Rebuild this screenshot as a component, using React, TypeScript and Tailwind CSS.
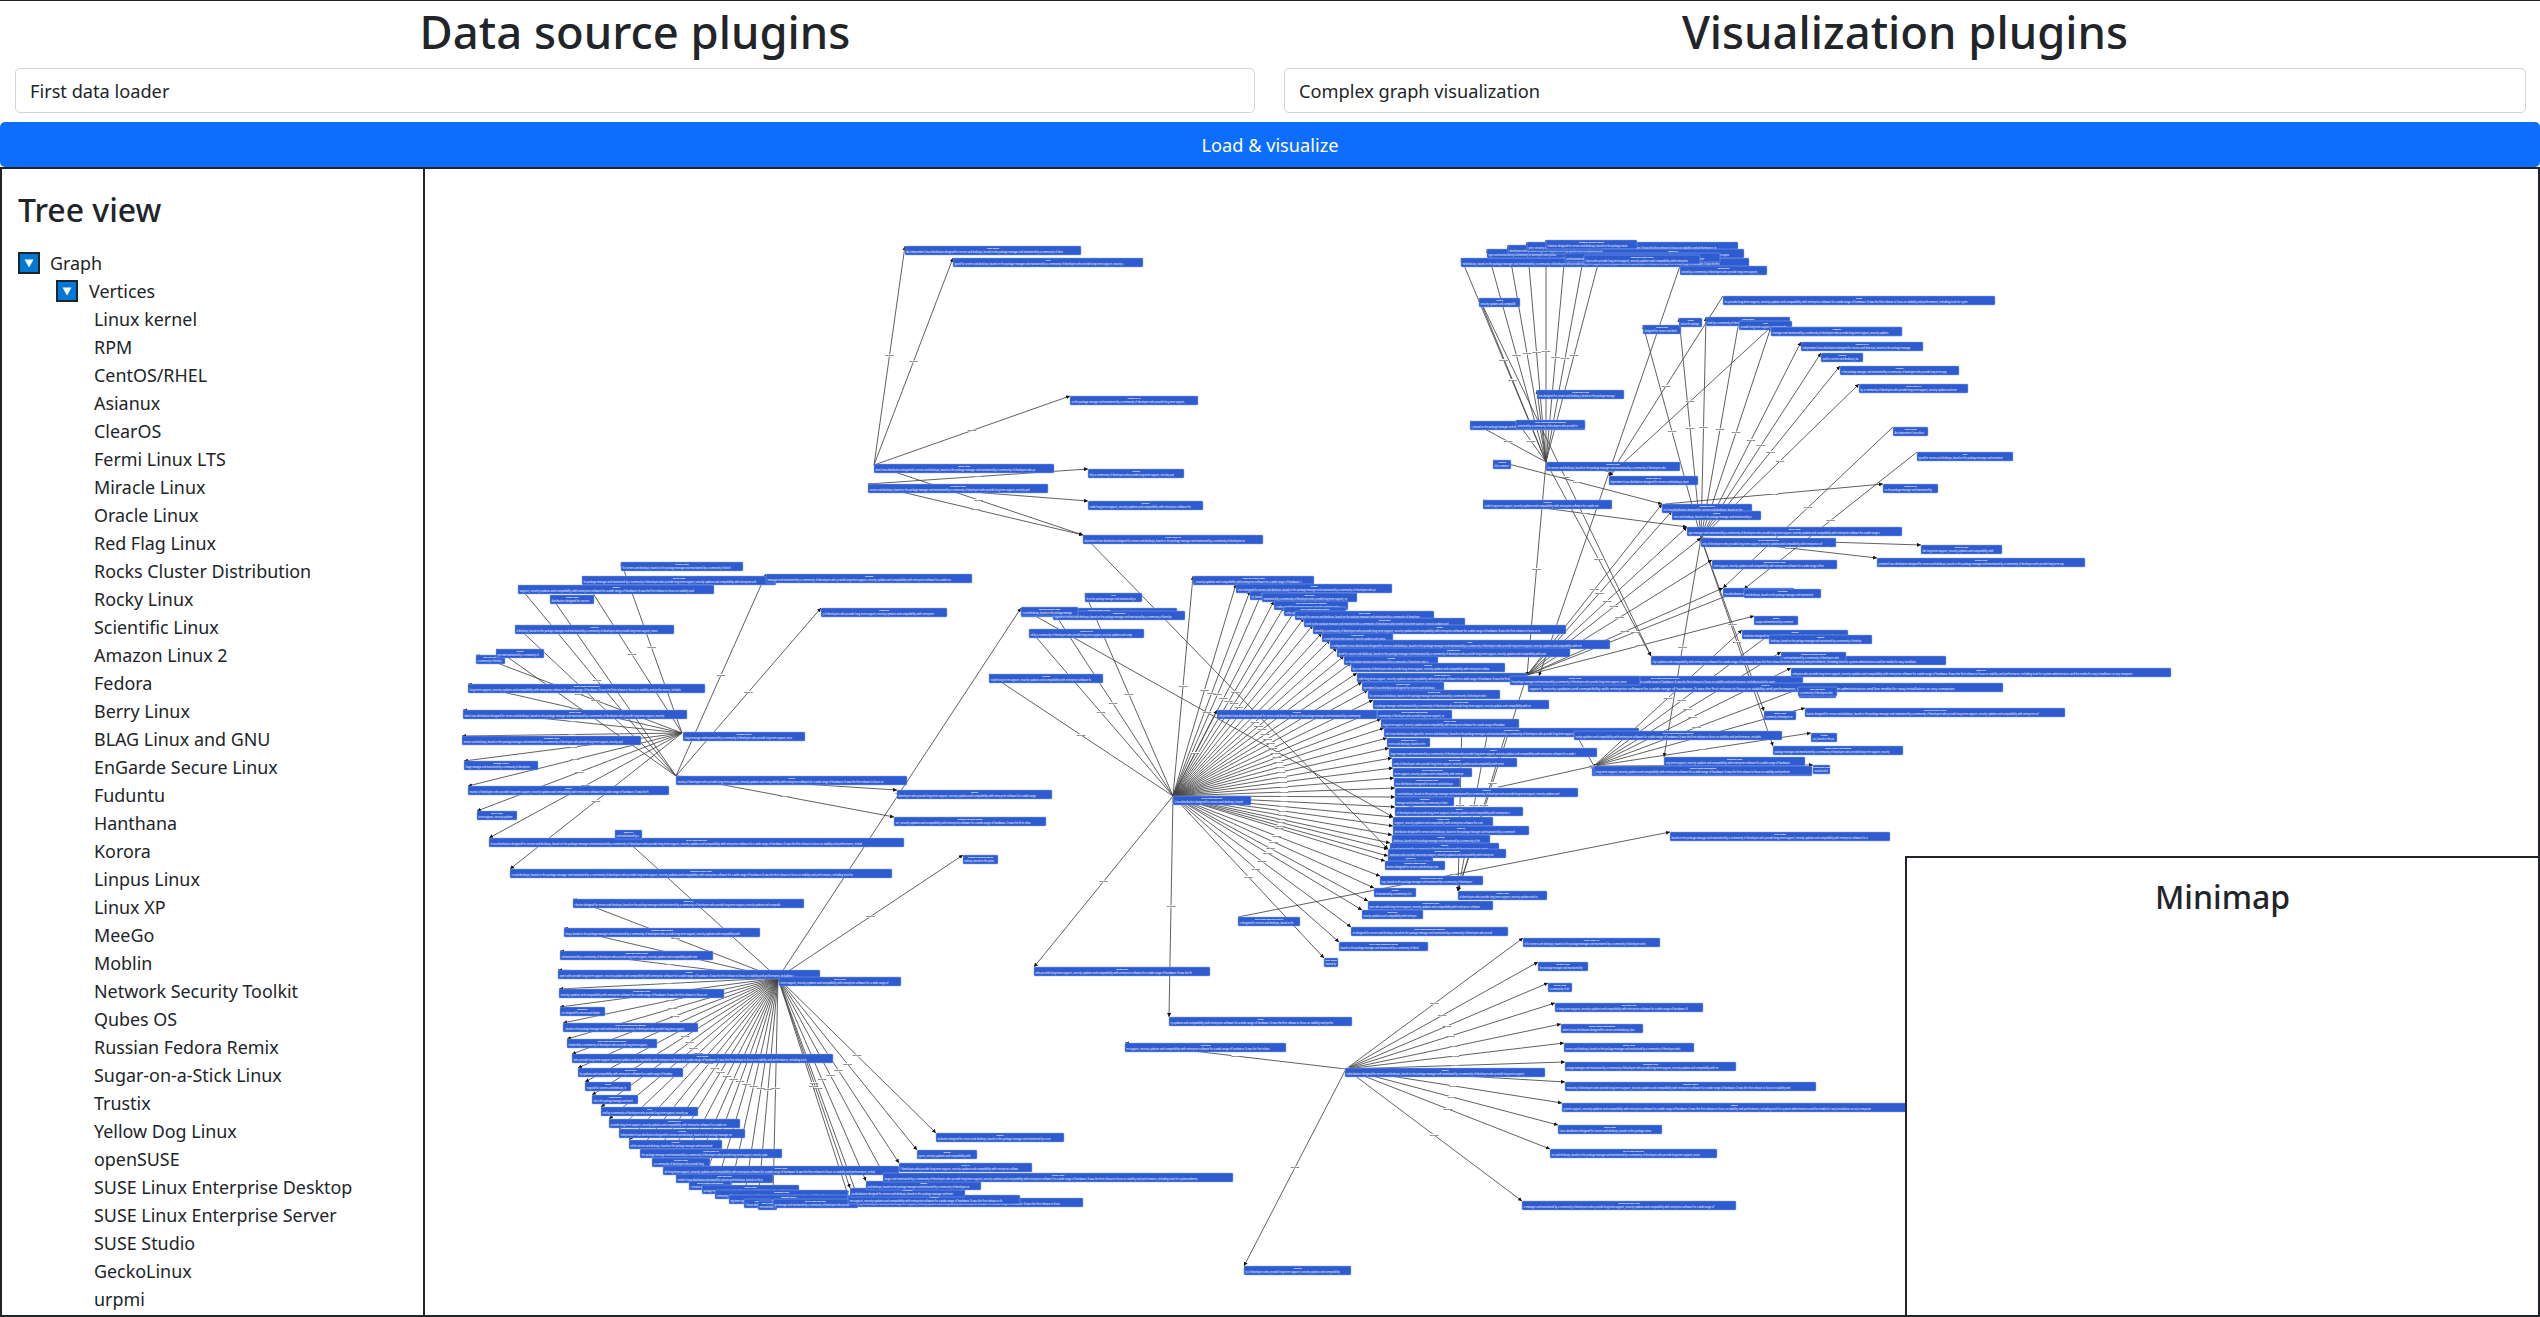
import React from 'react';

type N = [number, number, number];
type Group = { from: [number, number]; to: N[] };

const vertices = [
	'Linux kernel', 'RPM', 'CentOS/RHEL', 'Asianux', 'ClearOS', 'Fermi Linux LTS', 'Miracle Linux', 'Oracle Linux',
	'Red Flag Linux', 'Rocks Cluster Distribution', 'Rocky Linux', 'Scientific Linux', 'Amazon Linux 2', 'Fedora',
	'Berry Linux', 'BLAG Linux and GNU', 'EnGarde Secure Linux', 'Fuduntu', 'Hanthana', 'Korora', 'Linpus Linux',
	'Linux XP', 'MeeGo', 'Moblin', 'Network Security Toolkit', 'Qubes OS', 'Russian Fedora Remix', 'Sugar-on-a-Stick Linux',
	'Trustix', 'Yellow Dog Linux', 'openSUSE', 'SUSE Linux Enterprise Desktop', 'SUSE Linux Enterprise Server',
	'SUSE Studio', 'GeckoLinux', 'urpmi',
];

const blurb =
	'An independent Linux distribution designed for servers and desktops, based on the package manager and maintained by a community of developers who provide long term support, security updates and compatibility with enterprise software for a wide range of hardware. It was the first release to focus on stability and performance, including tools for system administrators and live media for easy installation on any computer. ';

// every edge runs from the top-left corner of one node to the top-left corner of another
const groups: Group[] = [
	{
		from: [874, 465],
		to: [[905, 246, 1081], [953, 258, 1143], [1070, 396, 1198]],
	},
	{
		from: [868, 484],
		to: [[1088, 469, 1184], [1088, 501, 1203], [1083, 535, 1263]],
	},
	{
		from: [682, 733],
		to: [
			[621, 562, 743], [582, 576, 776], [476, 655, 505], [468, 684, 705], [463, 710, 687], [462, 736, 641],
			[464, 761, 538], [468, 786, 669], [477, 811, 517], [489, 838, 904], [510, 869, 892],
		],
	},
	{
		from: [676, 776],
		to: [
			[766, 574, 972], [821, 608, 947], [518, 585, 714], [550, 595, 594], [515, 625, 674], [496, 649, 544],
			[897, 790, 1052], [894, 817, 1046],
		],
	},
	{
		from: [778, 978],
		to: [
			[573, 899, 804], [564, 928, 760], [560, 951, 713], [558, 970, 820], [559, 989, 724], [560, 1007, 605],
			[563, 1023, 698], [567, 1039, 657], [572, 1054, 833], [578, 1068, 683], [585, 1082, 631], [592, 1095, 638],
			[601, 1107, 698], [609, 1119, 740], [619, 1129, 745], [629, 1140, 722], [640, 1149, 782], [652, 1158, 710],
			[663, 1166, 899], [676, 1174, 773], [689, 1181, 731], [702, 1185, 799], [715, 1190, 848], [729, 1195, 848],
			[744, 1199, 772], [758, 1201, 777], [773, 1199, 858], [858, 1198, 1083], [848, 1195, 1020], [850, 1188, 965],
			[866, 1181, 981], [883, 1173, 1233], [899, 1163, 1032], [917, 1150, 977], [936, 1133, 1064], [963, 855, 998],
			[615, 830, 642], [1021, 608, 1177],
		],
	},
	{
		from: [1173, 796],
		to: [
			[1193, 576, 1314], [1236, 584, 1392], [1250, 591, 1289], [1262, 593, 1357], [1274, 601, 1348], [1284, 607, 1346],
			[1295, 611, 1434], [1304, 618, 1465], [1313, 625, 1566], [1322, 633, 1393], [1330, 640, 1610], [1337, 648, 1570],
			[1344, 656, 1438], [1351, 663, 1505], [1357, 673, 1527], [1362, 682, 1444], [1368, 690, 1500], [1373, 700, 1549],
			[1377, 710, 1452], [1381, 719, 1519], [1384, 728, 1639], [1387, 738, 1430], [1389, 748, 1597], [1392, 758, 1517],
			[1393, 768, 1472], [1394, 778, 1460], [1395, 788, 1578], [1395, 797, 1454], [1395, 807, 1523], [1393, 817, 1493],
			[1393, 826, 1529], [1392, 835, 1490], [1390, 843, 1499], [1388, 849, 1506], [1388, 856, 1433], [1385, 861, 1445],
			[1380, 876, 1483], [1374, 888, 1416], [1368, 901, 1493], [1362, 910, 1423], [1351, 927, 1508], [1339, 942, 1428],
			[1324, 958, 1338], [1034, 967, 1210], [1169, 1017, 1352], [1053, 611, 1185], [1085, 593, 1142], [1029, 629, 1144],
			[989, 674, 1103], [1217, 710, 1377],
		],
	},
	{
		from: [1346, 1069],
		to: [
			[1523, 938, 1660], [1538, 962, 1588], [1548, 983, 1572], [1555, 1003, 1703], [1561, 1024, 1643], [1564, 1043, 1694],
			[1565, 1062, 1736], [1565, 1082, 1816], [1562, 1103, 1906], [1558, 1125, 1662], [1550, 1149, 1717], [1522, 1201, 1736],
			[1244, 1266, 1351], [1125, 1043, 1286], [1345, 1068, 1545],
		],
	},
	{
		from: [1546, 462],
		to: [
			[1461, 258, 1749], [1487, 249, 1564], [1508, 245, 1640], [1527, 242, 1738], [1546, 240, 1637], [1602, 249, 1744],
			[1565, 253, 1720], [1584, 255, 1700], [1479, 298, 1520], [1537, 390, 1624], [1470, 421, 1585], [1516, 420, 1585],
			[1527, 676, 1803], [1651, 656, 1946],
		],
	},
	{
		from: [1701, 538],
		to: [
			[1643, 325, 1681], [1679, 318, 1702], [1706, 317, 1790], [1739, 321, 1792], [1801, 342, 1923], [1821, 353, 1863],
			[1840, 366, 1959], [1859, 384, 1968], [1921, 545, 2002], [1877, 558, 2085], [1771, 327, 1902], [1773, 746, 1903],
			[1764, 711, 1796], [1664, 757, 1805],
		],
	},
	{
		from: [1527, 675],
		to: [
			[1662, 504, 1752], [1672, 511, 1761], [1687, 527, 1902], [1701, 538, 1836], [1712, 560, 1837], [1723, 588, 1794],
			[1744, 589, 1821], [1754, 616, 1798], [1458, 891, 1547], [1528, 683, 2003],
		],
	},
	{
		from: [1594, 766],
		to: [
			[1742, 630, 1848], [1769, 635, 1872], [1781, 652, 1846], [1791, 668, 2171], [1799, 689, 1836], [1805, 708, 2065],
			[1811, 733, 1837], [1813, 765, 1830], [1592, 767, 1812], [1574, 731, 1782],
		],
	},
];

const strays: [number, number, number, number][] = [
	[874, 465, 1083, 535],
	[1083, 535, 1388, 849],
	[1021, 608, 1393, 817],
	[1238, 917, 1670, 832],
	[1395, 810, 1594, 766],
	[1723, 296, 1609, 476],
	[1771, 327, 1609, 476],
	[1680, 266, 1539, 676],
	[1479, 298, 1651, 656],
	[1493, 460, 1662, 504],
	[1483, 500, 1687, 527],
	[1665, 504, 1883, 484],
	[1893, 427, 1723, 588],
	[1917, 452, 1744, 589],
	[1462, 720, 1458, 891],
	[1490, 720, 1458, 891],
	[1510, 720, 1458, 891],
];

const looseNodes: N[] = [
	[1238, 917, 1300], [1670, 832, 1890], [1680, 266, 1767], [1723, 296, 1995], [1893, 427, 1928], [1917, 452, 2013],
	[1883, 484, 1938], [1493, 460, 1511], [1483, 500, 1612], [1609, 476, 1698], [1546, 462, 1680], [1510, 676, 1640],
	[1798, 687, 1837], [1594, 766, 1812], [874, 464, 1054], [868, 484, 1048], [683, 732, 805], [676, 776, 907],
	[779, 977, 901], [1173, 796, 1251], [1021, 607, 1078], [1771, 327, 1902],
];

const edges = [
	...groups.flatMap((g) => g.to.map((t) => [g.from[0], g.from[1], t[0], t[1]] as [number, number, number, number])),
	...strays,
];
const nodes: N[] = [...groups.flatMap((g) => g.to), ...looseNodes];

const GraphCanvas = () => (
	<svg className="block" width="2113" height="1146" viewBox="425 169 2113 1146">
		<defs>
			<marker id="arrow" viewBox="0 0 6 6" refX="6" refY="3" markerWidth="4" markerHeight="4" markerUnits="userSpaceOnUse" orient="auto">
				<path d="M0 0L6 3L0 6z" fill="#111" />
			</marker>
		</defs>
		{edges.map(([a, b, c, d], i) => (
			<line key={i} x1={a} y1={b} x2={c} y2={d} stroke="#444" strokeWidth="0.85" markerEnd="url(#arrow)" />
		))}
		{edges.map(([a, b, c, d], i) => (
			<g key={i}>
				<rect x={(a + c) / 2 - 4} y={(b + d) / 2 - 1} width="8" height="2" fill="#fff" />
				<text x={(a + c) / 2} y={(b + d) / 2 + 0.8} textAnchor="middle" fontSize="2.3" fontWeight="700" fill="#222">
					derives
				</text>
			</g>
		))}
		{nodes.map(([x, y, r], i) => {
			const w = r - x;
			const len = Math.max(8, Math.round(w / 1.3));
			const start = (i * 37) % 180;
			return (
				<g key={i}>
					<rect x={x} y={y} width={w} height="9" rx="1" fill="#2e5bcf" stroke="#8fa8e8" strokeWidth="0.5" />
					<text x={x + w / 2} y={y + 2.6} textAnchor="middle" fontSize="2" fontWeight="700" fill="#fff">
						{vertices[i % vertices.length]}
					</text>
					<text x={x + 1.5} y={y + 6.6} fontSize="2.8" fill="#fff" textLength={Math.max(w * 0.9 - 2, 4)} lengthAdjust="spacingAndGlyphs">
						{blurb.slice(start, start + len).trim()}
					</text>
				</g>
			);
		})}
	</svg>
);

const Toggle = () => (
	<span className="flex h-[22px] w-[22px] shrink-0 items-center justify-center border-2 border-[#212529] bg-[#0078d7]">
		<svg width="10" height="9" viewBox="0 0 10 9">
			<path d="M0.5 0.5H9.5L5 8.5z" fill="#fff" />
		</svg>
	</span>
);

const App = () => {
	return (
		<div className="flex h-screen flex-col overflow-hidden border-t border-[#212529] bg-white font-['Noto_Sans',sans-serif] text-[#212529]">
			<div className="grid h-[67px] grid-cols-2">
				<h1 className="flex items-center justify-center pb-[6px] text-[45.4px] leading-none font-medium">Data source plugins</h1>
				<h1 className="flex items-center justify-center pb-[6px] text-[45.4px] leading-none font-medium">Visualization plugins</h1>
			</div>
			<div className="grid grid-cols-2">
				<div className="px-[15px]">
					<div className="flex h-[45px] items-center rounded-[5px] border border-[#ced4da] px-[14px] pt-[2px] text-[18.2px]">First data loader</div>
				</div>
				<div className="px-[14px]">
					<div className="flex h-[45px] items-center rounded-[5px] border border-[#ced4da] px-[14px] pt-[2px] text-[18.2px]">Complex graph visualization</div>
				</div>
			</div>
			<button className="mt-[9px] h-[45px] w-full rounded-[5px] bg-[#0d6efd] pt-[2px] text-[18.2px] text-white">Load &amp; visualize</button>
			<div className="flex min-h-0 flex-1 border-2 border-[#212529]">
				<aside className="w-[423px] shrink-0 overflow-hidden border-r-2 border-[#212529] px-4 pt-[21px]">
					<h3 className="mb-[19px] text-[32px] leading-[40px] font-medium">Tree view</h3>
					<div className="flex h-7 items-center gap-[10px] text-[17.9px]">
						<Toggle />
						Graph
					</div>
					<div className="flex h-7 items-center gap-[11px] pl-[38px] text-[17.9px]">
						<Toggle />
						Vertices
					</div>
					<ul className="pl-[76px] text-[17.9px]">
						{vertices.map((name) => (
							<li key={name} className="h-7 leading-7 whitespace-nowrap">
								{name}
							</li>
						))}
					</ul>
				</aside>
				<div className="relative min-w-0 flex-1 overflow-hidden">
					<GraphCanvas />
					<div className="absolute right-0 bottom-0 h-[459px] w-[633px] border-t-2 border-l-2 border-[#212529] bg-white pt-[19px] text-center">
						<h3 className="text-[32px] leading-[40px] font-medium">Minimap</h3>
					</div>
				</div>
			</div>
		</div>
	);
};

export default App;
